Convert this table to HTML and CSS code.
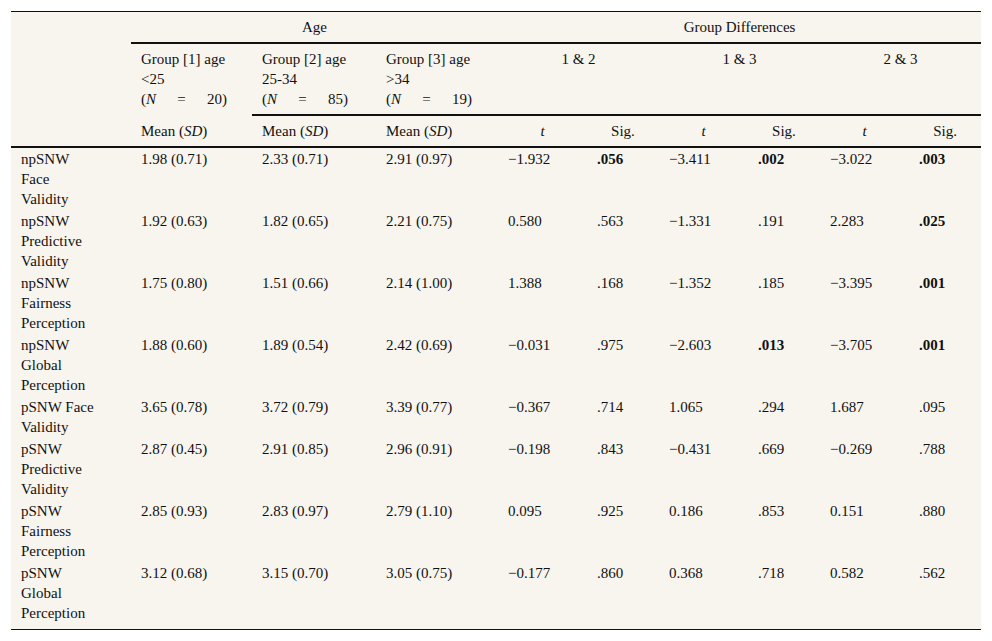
FILE: index.html
```html
<!DOCTYPE html>
<html lang="en">
<head>
<meta charset="utf-8">
<title>Age group differences</title>
<link rel="stylesheet" href="styles.css">
</head>
<body>
<table class="tbl">
  <colgroup>
    <col class="c-label"><col class="c-g1"><col class="c-g2"><col class="c-g3">
    <col class="c-t"><col class="c-s"><col class="c-t"><col class="c-s"><col class="c-t"><col class="c-s">
  </colgroup>
  <thead>
    <tr class="row-a">
      <th class="corner" rowspan="3"></th>
      <th class="center rule" colspan="3">Age</th>
      <th class="center rule" colspan="6">Group Differences</th>
    </tr>
    <tr class="row-b">
      <th class="left">Group [1] age<br>&lt;25<br><span class="n"><span>(<i>N</i></span><span>=</span><span>20)</span></span></th>
      <th class="left rule">Group [2] age<br>25-34<br><span class="n"><span>(<i>N</i></span><span>=</span><span>85)</span></span></th>
      <th class="left rule">Group [3] age<br>&gt;34<br><span class="n"><span>(<i>N</i></span><span>=</span><span>19)</span></span></th>
      <th class="center rule" colspan="2">1 &amp; 2</th>
      <th class="center rule" colspan="2">1 &amp; 3</th>
      <th class="center rule" colspan="2">2 &amp; 3</th>
    </tr>
    <tr class="row-c">
      <th class="left rule">Mean (<i>SD</i>)</th>
      <th class="left rule">Mean (<i>SD</i>)</th>
      <th class="left rule">Mean (<i>SD</i>)</th>
      <th class="center rule"><i>t</i></th>
      <th class="center rule">Sig.</th>
      <th class="center rule"><i>t</i></th>
      <th class="center rule">Sig.</th>
      <th class="center rule"><i>t</i></th>
      <th class="center rule">Sig.</th>
    </tr>
  </thead>
  <tbody>
    <tr>
      <td>npSNW<br>Face<br>Validity</td>
      <td>1.98 (0.71)</td><td>2.33 (0.71)</td><td>2.91 (0.97)</td>
      <td>−1.932</td><td><b>.056</b></td><td>−3.411</td><td><b>.002</b></td><td>−3.022</td><td><b>.003</b></td>
    </tr>
    <tr>
      <td>npSNW<br>Predictive<br>Validity</td>
      <td>1.92 (0.63)</td><td>1.82 (0.65)</td><td>2.21 (0.75)</td>
      <td>0.580</td><td>.563</td><td>−1.331</td><td>.191</td><td>2.283</td><td><b>.025</b></td>
    </tr>
    <tr>
      <td>npSNW<br>Fairness<br>Perception</td>
      <td>1.75 (0.80)</td><td>1.51 (0.66)</td><td>2.14 (1.00)</td>
      <td>1.388</td><td>.168</td><td>−1.352</td><td>.185</td><td>−3.395</td><td><b>.001</b></td>
    </tr>
    <tr>
      <td>npSNW<br>Global<br>Perception</td>
      <td>1.88 (0.60)</td><td>1.89 (0.54)</td><td>2.42 (0.69)</td>
      <td>−0.031</td><td>.975</td><td>−2.603</td><td><b>.013</b></td><td>−3.705</td><td><b>.001</b></td>
    </tr>
    <tr>
      <td>pSNW Face<br>Validity</td>
      <td>3.65 (0.78)</td><td>3.72 (0.79)</td><td>3.39 (0.77)</td>
      <td>−0.367</td><td>.714</td><td>1.065</td><td>.294</td><td>1.687</td><td>.095</td>
    </tr>
    <tr>
      <td>pSNW<br>Predictive<br>Validity</td>
      <td>2.87 (0.45)</td><td>2.91 (0.85)</td><td>2.96 (0.91)</td>
      <td>−0.198</td><td>.843</td><td>−0.431</td><td>.669</td><td>−0.269</td><td>.788</td>
    </tr>
    <tr>
      <td>pSNW<br>Fairness<br>Perception</td>
      <td>2.85 (0.93)</td><td>2.83 (0.97)</td><td>2.79 (1.10)</td>
      <td>0.095</td><td>.925</td><td>0.186</td><td>.853</td><td>0.151</td><td>.880</td>
    </tr>
    <tr class="last">
      <td>pSNW<br>Global<br>Perception</td>
      <td>3.12 (0.68)</td><td>3.15 (0.70)</td><td>3.05 (0.75)</td>
      <td>−0.177</td><td>.860</td><td>0.368</td><td>.718</td><td>0.582</td><td>.562</td>
    </tr>
  </tbody>
</table>
</body>
</html>
```

FILE: styles.css
```css
html, body {
  margin: 0;
  background: #ffffff;
}
body {
  padding: 11px;
  font-family: "Liberation Serif", "Times New Roman", serif;
  font-size: 15px;
  line-height: 20px;
  color: #111;
}
.tbl {
  width: 970px;
  table-layout: fixed;
  border-collapse: separate;
  border-spacing: 0;
  background: #f8f5ef;
  border-top: 1px solid #111;
  border-bottom: 1px solid #111;
}
.c-label { width: 120px; }
.c-g1 { width: 121px; }
.c-g2 { width: 124px; }
.c-g3 { width: 122px; }
.c-t { width: 89px; }
.c-s { width: 72px; }

th {
  font-weight: normal;
  padding: 5px 10px;
  vertical-align: top;
}
th.left { text-align: left; }
th.center { text-align: center; }
th.rule { border-bottom: 2px solid #111; }
th.corner { border-bottom: 2px solid #111; padding: 0; }

.n {
  display: flex;
  justify-content: space-between;
  width: 86px;
}

td {
  padding: 1px 10px;
  vertical-align: top;
  text-align: left;
  white-space: nowrap;
}
tr.last td { padding-bottom: 6px; }
b { font-weight: bold; }
```
